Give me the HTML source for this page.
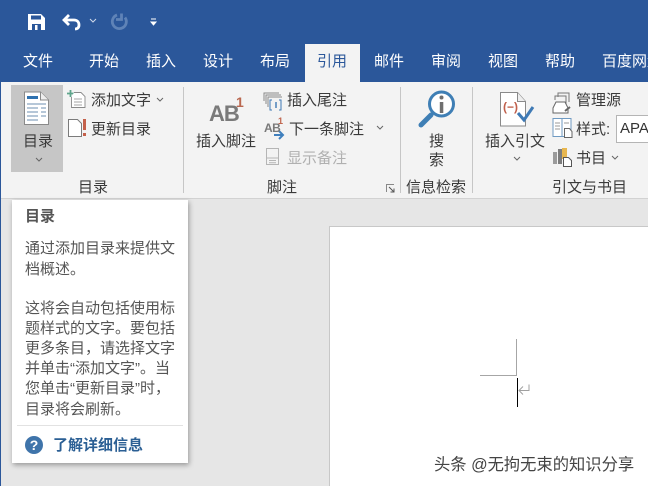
<!DOCTYPE html>
<html lang="zh"><head><meta charset="utf-8"><style>
html,body{margin:0;padding:0;width:648px;height:486px;overflow:hidden}
#w{position:relative;width:648px;height:486px;overflow:hidden;background:#e6e6e6;font-family:"Liberation Sans","Noto Sans CJK SC",sans-serif;color:#3a3a3a}
.a{position:absolute}
.t{position:absolute;white-space:nowrap;line-height:20px;font-size:15px;margin-top:1px}
.tab{position:absolute;top:52px;font-size:15px;line-height:20px;color:#fff;white-space:nowrap}
.sep{position:absolute;top:87px;width:1px;height:106px;background:#c6c6c6}
svg{position:absolute;overflow:visible}
.tip{position:absolute;left:25px;font-size:15px;line-height:20px;color:#555;white-space:nowrap}
</style></head><body><div id="w">
<div class="a" style="left:0;top:0;width:648px;height:82px;background:#2b579a"></div>
<div class="a" style="left:305px;top:44px;width:55px;height:38px;background:#f3f3f3"></div>
<div class="a" style="left:0;top:82px;width:648px;height:116px;background:#f3f3f3"></div>
<div class="a" style="left:0;top:198px;width:648px;height:1px;background:#d2d2d2"></div>
<div class="a" style="left:0;top:82px;width:1px;height:404px;background:#2b579a"></div>

<!-- QAT -->
<svg style="left:0;top:0" width="170" height="40">
<path d="M28 14h13l4 4v12H28z" fill="#fff"/><rect x="31" y="15.500" width="10" height="4" fill="#2b579a"/><rect x="32" y="24" width="9" height="6" fill="#2b579a"/><rect x="35" y="25" width="2.500" height="5" fill="#fff"/>
<path d="M64 20h10c3 0 5 2 5 5s-2 4-4 4M69 15l-5 5 5 5" fill="none" stroke="#fff" stroke-width="2.800"/>
<path d="M90 19l3 3 3-3" fill="none" stroke="#cfd9ea" stroke-width="1"/>
<path d="M117 15a7 7 0 1 0 8 2.500M121.500 13.500v6h-5.500" fill="none" stroke="#5f83b7" stroke-width="2.800"/>
<path d="M151 19h5M151 22h5l-2.500 3z" fill="#fff" stroke="#fff" stroke-width="1"/>
</svg>

<div class="tab" style="left:23px">文件</div><div class="tab" style="left:89px">开始</div><div class="tab" style="left:146px">插入</div><div class="tab" style="left:203px">设计</div><div class="tab" style="left:260px">布局</div><div class="tab" style="left:317px;color:#2b579a">引用</div><div class="tab" style="left:374px">邮件</div><div class="tab" style="left:431px">审阅</div><div class="tab" style="left:488px">视图</div><div class="tab" style="left:545px">帮助</div><div class="tab" style="left:602px">百度网盘</div>

<!-- TOC group -->
<div class="a" style="left:11px;top:85px;width:52px;height:87px;background:#c6c6c6"></div>
<svg style="left:0;top:80px" width="180" height="70">
<path d="M24.500 12h16l8 8v24.500h-24z" fill="#fff" stroke="#8a8a8a"/><path d="M40.500 12v8h8" fill="#eee" stroke="#8a8a8a"/>
<rect x="27" y="16" width="11" height="3" fill="#2f72b0"/>
<path d="M27 24h19M27 28h11M41 28h5M27 32h11M41 32h5M27 36h11M41 36h5M27 40h11" stroke="#6d8fb0"/>
<path d="M70.500 10v7M67 13.500h7" stroke="#5fa58c" stroke-width="1.800"/>
<path d="M74 12.500h7l4 4v11H71.500V17" fill="#fff" stroke="#8a8a8a" stroke-width=".9"/><path d="M74 19h8M74 22h8M74 25h8" stroke="#a6a6a6"/>
<path d="M68.500 39.500h9l4 4v13H68.500z" fill="#fff" stroke="#7b7b7b"/>
<rect x="83" y="39" width="3" height="11" fill="#c4604a"/><rect x="83" y="53" width="3" height="3" fill="#c4604a"/>
</svg>
<div class="t" style="left:91px;top:90px">添加文字</div>
<svg style="left:0;top:0" width="648" height="200"><path d="M157 98l3 3 3-3M36 158l3 3 3-3M377 126l3 3 3-3M514 157l3 3 3-3M612 156l3 3 3-3" fill="none" stroke="#666"/></svg>
<div class="t" style="left:91px;top:119px">更新目录</div>
<div class="t" style="left:23px;top:131px">目录</div>
<div class="t" style="left:78px;top:177px">目录</div>
<div class="sep" style="left:183px"></div><div class="sep" style="left:400px"></div><div class="sep" style="left:472px"></div>

<!-- Footnotes -->
<div class="t" style="left:209px;top:99px;font-size:22px;font-weight:bold;color:#7a7a7a;line-height:28px;letter-spacing:-1px">AB</div>
<div class="t" style="left:236px;top:93px;font-size:14px;font-weight:bold;color:#b9674f;line-height:16px">1</div>
<div class="t" style="left:196px;top:131px">插入脚注</div>
<svg style="left:0;top:0" width="648" height="200">
<path d="M264 101v-8h15M266 104v-9h15M268 107v-10h14" fill="none" stroke="#8a8a8a"/><path d="M272 100h-2v10h2M279 100h2v10h-2" fill="none" stroke="#3f7ab5"/><rect x="275.300" y="102" width="1.400" height="6" fill="#3f7ab5"/>
<path d="M274 135h9M279 131l4 4-4 4" fill="none" stroke="#3f7fbd" stroke-width="2"/>
<rect x="266.500" y="148.500" width="12" height="16" fill="none" stroke="#b5b5b5"/><path d="M267 158h11M269 160.500h7M269 162.800h7" stroke="#b5b5b5"/>
</svg>
<div class="t" style="left:264px;top:117px;font-size:12px;font-weight:bold;color:#7a7a7a;letter-spacing:-.5px">AB</div>
<div class="t" style="left:278px;top:110px;font-size:9px;font-weight:bold;color:#c0664f">1</div>
<div class="t" style="left:287px;top:90px">插入尾注</div>
<div class="t" style="left:289px;top:119px">下一条脚注</div>
<div class="t" style="left:287px;top:148px;color:#b0b0b0">显示备注</div>
<div class="t" style="left:267px;top:177px">脚注</div>
<svg style="left:386px;top:184px" width="10" height="10"><path d="M.5 8V.5H8" fill="none" stroke="#888"/><path d="M3 3l5 5M8 4.500V8H4.500" fill="none" stroke="#555"/></svg>

<!-- Search -->
<svg style="left:416px;top:88px" width="44" height="44">
<circle cx="25.500" cy="16" r="12" fill="#fff" stroke="#3f7fb5" stroke-width="3"/>
<path d="M15 27L5 37" stroke="#3f7fb5" stroke-width="5" stroke-linecap="round"/>
<circle cx="25.500" cy="9.500" r="2" fill="#6f6f6f"/><rect x="23.800" y="14" width="3.500" height="11" fill="#6f6f6f"/>
</svg>
<div class="t" style="left:429px;top:131px">搜</div><div class="t" style="left:429px;top:150px">索</div>
<div class="t" style="left:406px;top:177px">信息检索</div>

<!-- Citations -->
<svg style="left:0;top:0" width="648" height="200">
<path d="M500.500 92.500h17l8 9v24.500h-25z" fill="#fff" stroke="#8a8a8a"/><path d="M517.500 92.500v9h8" fill="#eee" stroke="#8a8a8a"/>
<text x="503" y="111" font-size="12" font-weight="bold" fill="#c0604c" font-family="Liberation Sans">(−)</text>
<path d="M518 113l6 7 9-13" fill="none" stroke="#3f7ab5" stroke-width="3"/>
<path d="M558 97v-4h11v9M555 100v-4h11v9" fill="#f3f3f3" stroke="#777"/><path d="M553 108l3-6h9l3 6v5h-15z" fill="#fff" stroke="#666"/><path d="M565 111l5-4" stroke="#666" stroke-width="2"/>
<rect x="553" y="118.500" width="9" height="18" fill="#fff" stroke="#6f9ac2"/><rect x="562" y="118.500" width="9" height="18" fill="#fff" stroke="#6f9ac2"/><path d="M555 123h5M555 126h5M555 129h5M564 123h5" stroke="#999"/>
<path d="M564.500 128.500h5l2.500 3v6h-7.500z" fill="#fff" stroke="#666"/>
<rect x="553" y="152" width="4" height="12" fill="#9b9b9b"/><rect x="558" y="149" width="4" height="15" fill="#7d7d7d"/><rect x="562" y="148" width="5" height="11" fill="#e8b74f"/>
<path d="M563.500 157.500h5l3 3v6h-8z" fill="#fff" stroke="#555"/>
</svg>
<div class="t" style="left:485px;top:131px">插入引文</div>
<div class="t" style="left:576px;top:90px">管理源</div>
<div class="t" style="left:576px;top:119px">样式:</div>
<div class="a" style="left:616px;top:115px;width:40px;height:26px;background:#fff;border:1px solid #b5b5b5;font-size:15px;line-height:26px;padding-left:3px;color:#333">APA</div>
<div class="t" style="left:576px;top:148px">书目</div>
<div class="t" style="left:552px;top:177px">引文与书目</div>

<!-- Page -->
<div class="a" style="left:329px;top:226px;width:330px;height:270px;background:#fff;border:1px solid #c8c8c8"></div>
<div class="a" style="left:480px;top:375px;width:37px;height:1px;background:#a6a6a6"></div>
<div class="a" style="left:516px;top:339px;width:1px;height:37px;background:#a6a6a6"></div>
<div class="a" style="left:517px;top:378px;width:1px;height:29px;background:#000"></div>
<svg style="left:518px;top:384px" width="14" height="14"><path d="M11 .5v6H1M5 2.500L1 6.500l4 4" fill="none" stroke="#a0a0a0"/></svg>
<div class="t" style="left:434px;top:454px;color:#444;font-size:16.300px;text-shadow:0 0 2px #fff">头条 @无拘无束的知识分享</div>

<!-- Tooltip -->
<div class="a" style="left:12px;top:200px;width:176px;height:263px;background:#fff;box-shadow:1px 2px 5px rgba(0,0,0,.35)"></div>
<div class="tip" style="top:207px;font-weight:bold">目录</div>
<div class="tip" style="top:239px">通过添加目录来提供文</div>
<div class="tip" style="top:260px">档概述。</div>
<div class="tip" style="top:299px">这将会自动包括使用标</div>
<div class="tip" style="top:319px">题样式的文字。要包括</div>
<div class="tip" style="top:339px">更多条目，请选择文字</div>
<div class="tip" style="top:359px">并单击“添加文字”。当</div>
<div class="tip" style="top:379px">您单击“更新目录”时，</div>
<div class="tip" style="top:400px">目录将会刷新。</div>
<div class="a" style="left:17px;top:425px;width:166px;height:1px;background:#e2e2e2"></div>
<svg style="left:25px;top:436px" width="18" height="18"><circle cx="9" cy="9" r="9" fill="#3f74aa"/><text x="9" y="14" text-anchor="middle" font-size="14" font-weight="bold" fill="#fff" font-family="Liberation Sans">?</text></svg>
<div class="tip" style="left:53px;top:436px;font-weight:bold;color:#2b5f94">了解详细信息</div>
</div></body></html>
